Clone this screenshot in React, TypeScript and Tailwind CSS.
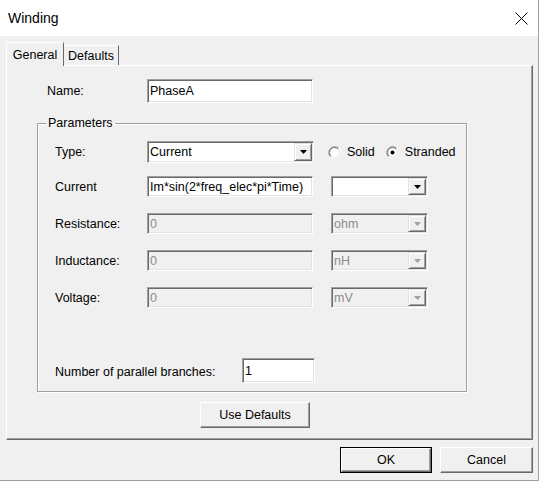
import type { ReactNode } from 'react';

// ─── Shared classic-Windows bevels ────────────────────────────────────────────
const SUNKEN =
  'border border-t-[#a0a0a0] border-l-[#a0a0a0] border-r-white border-b-white ' +
  'shadow-[inset_1px_1px_0_#696969,inset_-1px_-1px_0_#e3e3e3]';

const RAISED =
  'border border-t-white border-l-white border-r-[#696969] border-b-[#696969] ' +
  'shadow-[inset_-1px_-1px_0_#a0a0a0] bg-[#f0f0f0]';

// ─── Pieces ───────────────────────────────────────────────────────────────────
function Arrow({ disabled }: { disabled?: boolean }) {
  return (
    <svg width="7" height="4" viewBox="0 0 7 4">
      <polygon points="0,0 7,0 3.5,4" fill={disabled ? '#a0a0a0' : '#000'} />
    </svg>
  );
}

interface FieldProps {
  value: string;
  width: string;
  height?: string;
  disabled?: boolean;
}

function TextField({ value, width, height = 'h-[21px]', disabled }: FieldProps) {
  return (
    <div
      className={`${SUNKEN} ${width} ${height} flex items-center pl-[2px] ${
        disabled ? 'bg-[#f0f0f0] text-[#8c8c8c]' : 'bg-white text-black'
      }`}
    >
      {value}
    </div>
  );
}

function Combo({ value, width, height = 'h-[21px]', disabled }: FieldProps) {
  return (
    <div
      className={`${SUNKEN} ${width} ${height} flex items-stretch ${
        disabled ? 'bg-[#f0f0f0] text-[#8c8c8c]' : 'bg-white text-black'
      }`}
    >
      <span className="flex-1 flex items-center pl-[2px]">{value}</span>
      <span
        className="w-[18px] my-px mr-px border border-t-[#e3e3e3] border-l-[#e3e3e3] border-r-[#696969] border-b-[#696969]
                   shadow-[inset_1px_1px_0_#fff,inset_-1px_-1px_0_#a0a0a0] bg-[#f0f0f0] flex items-center justify-center"
      >
        <Arrow disabled={disabled} />
      </span>
    </div>
  );
}

function Radio({ label, checked }: { label: string; checked?: boolean }) {
  return (
    <div className="flex items-center gap-[6px]">
      <svg width="13" height="13" viewBox="0 0 13 13">
        <circle cx="6.5" cy="6.5" r="5.5" fill="#fff" />
        <path d="M 2.26 10.74 A 6 6 0 0 1 10.74 2.26" stroke="#a0a0a0" fill="none" />
        <path d="M 10.74 2.26 A 6 6 0 0 1 2.26 10.74" stroke="#fff" fill="none" />
        <path d="M 2.96 10.04 A 5 5 0 0 1 10.04 2.96" stroke="#696969" fill="none" />
        <path d="M 10.04 2.96 A 5 5 0 0 1 2.96 10.04" stroke="#e3e3e3" fill="none" />
        {checked && <circle cx="6.5" cy="6.5" r="2" fill="#000" />}
      </svg>
      <span>{label}</span>
    </div>
  );
}

function Row({ label, labelWidth, className, children }: {
  label: string;
  labelWidth: string;
  className?: string;
  children: ReactNode;
}) {
  return (
    <div className={`flex items-center ${className ?? ''}`}>
      <span className={labelWidth}>{label}</span>
      {children}
    </div>
  );
}

// ─── Dialog ───────────────────────────────────────────────────────────────────
export default function App() {
  return (
    <div className="w-[542px] h-[483px] bg-white overflow-hidden font-['Liberation_Sans',Arial,sans-serif] text-[12.5px] text-black leading-[14px]">
      <div className="w-[539px] h-[481px] bg-[#f0f0f0] border-r border-b border-[#a0a0a0] flex flex-col">
        {/* Title bar */}
        <div className="h-[36px] shrink-0 bg-white flex items-center justify-between pl-[8px] pr-[10px]">
          <span className="text-[14px]">Winding</span>
          <svg width="13" height="13" viewBox="0 0 13 13">
            <path d="M0.5 0.5 L12.5 12.5 M12.5 0.5 L0.5 12.5" stroke="#000" strokeWidth="1" />
          </svg>
        </div>

        {/* Tabs */}
        <div className="mt-[6px] ml-[6px] h-[24px] flex items-end shrink-0">
          <div className="relative z-10 w-[58px] h-[24px] bg-[#f0f0f0] border-l border-t border-white border-r border-r-[#696969] flex items-center justify-center">
            General
          </div>
          <div className="w-[55px] h-[21px] border-t border-white border-r border-r-[#696969] flex items-center justify-center pb-px">
            Defaults
          </div>
        </div>

        {/* Tab panel */}
        <div className={`-mt-px ml-[6px] w-[527px] h-[375px] shrink-0 flex flex-col ${RAISED}`}>
          <Row label="Name:" labelWidth="w-[100px]" className="mt-[13px] ml-[40px] h-[24px]">
            <TextField value="PhaseA" width="w-[166px]" height="h-[24px]" />
          </Row>

          <fieldset className="mt-[13px] ml-[30px] w-[430px] border border-[#a0a0a0] shadow-[1px_1px_0_#fff,inset_1px_1px_0_#fff] pb-[8px]">
            <legend className="ml-[8px] px-[2px] leading-[14px]">Parameters</legend>

            <div className="pl-[17px] flex flex-col">
              <Row label="Type:" labelWidth="w-[92px]" className="mt-[11px]">
                <Combo value="Current" width="w-[167px]" height="h-[22px]" />
                <div className="ml-[14px] flex items-center gap-[11px]">
                  <Radio label="Solid" />
                  <Radio label="Stranded" checked />
                </div>
              </Row>

              <Row label="Current" labelWidth="w-[92px]" className="mt-[13px]">
                <TextField value="Im*sin(2*freq_elec*pi*Time)" width="w-[166px]" />
                <div className="ml-[18px]">
                  <Combo value="" width="w-[97px]" />
                </div>
              </Row>

              <Row label="Resistance:" labelWidth="w-[92px]" className="mt-[16px]">
                <TextField value="0" width="w-[166px]" disabled />
                <div className="ml-[18px]">
                  <Combo value="ohm" width="w-[97px]" disabled />
                </div>
              </Row>

              <Row label="Inductance:" labelWidth="w-[92px]" className="mt-[16px]">
                <TextField value="0" width="w-[166px]" disabled />
                <div className="ml-[18px]">
                  <Combo value="nH" width="w-[97px]" disabled />
                </div>
              </Row>

              <Row label="Voltage:" labelWidth="w-[92px]" className="mt-[16px]">
                <TextField value="0" width="w-[166px]" disabled />
                <div className="ml-[18px]">
                  <Combo value="mV" width="w-[97px]" disabled />
                </div>
              </Row>

              <Row label="Number of parallel branches:" labelWidth="w-[187px] pt-[3px]" className="mt-[50px]">
                <TextField value="1" width="w-[73px]" height="h-[25px]" />
              </Row>
            </div>
          </fieldset>

          <button className={`mt-[10px] ml-[193px] w-[110px] h-[26px] ${RAISED}`}>Use Defaults</button>
        </div>

        {/* Dialog buttons */}
        <div className="mt-[7px] pr-[5px] flex justify-end gap-[8px]">
          <div className="border border-[#000]">
            <button className={`w-[90px] h-[24px] ${RAISED}`}>OK</button>
          </div>
          <button className={`w-[93px] h-[26px] ${RAISED}`}>Cancel</button>
        </div>
      </div>
    </div>
  );
}
